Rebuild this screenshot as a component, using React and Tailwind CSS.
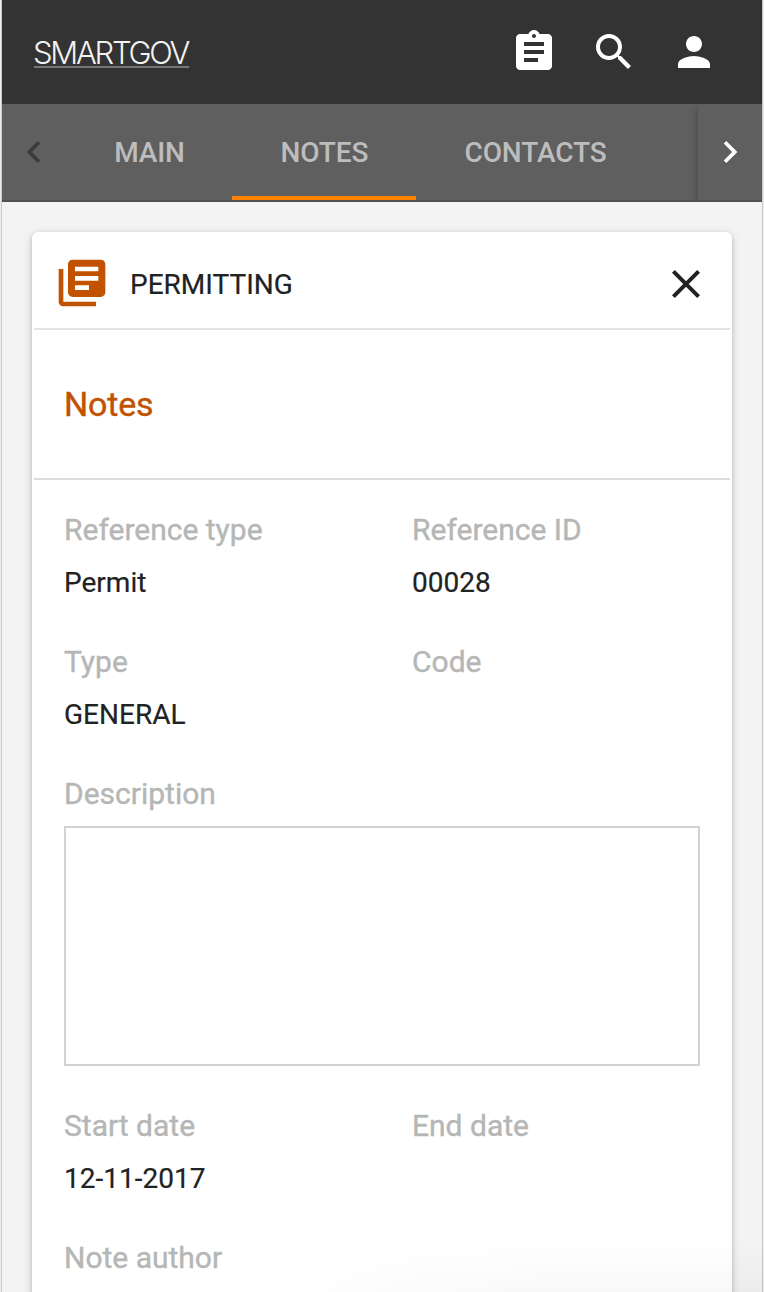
import {
  MdAssignment,
  MdChevronLeft,
  MdChevronRight,
  MdLibraryBooks,
  MdPerson,
  MdSearch,
} from "react-icons/md";

function Field({ label, value }) {
  return (
    <div className="h-[132px]">
      <div className="h-[53px] text-[30px] leading-[40px] text-[#b5b7b6] [-webkit-text-stroke:0.4px_#b5b7b6]">{label}</div>
      <div className="text-[28px] leading-[40px] [-webkit-text-stroke:0.2px_#212223]">{value}</div>
    </div>
  );
}

function Tab({ label, className, active }) {
  return (
    <button className={`flex h-[96px] items-center justify-center border-b-4 pt-1.5 pl-px text-[28px] font-medium tracking-[-0.1px] text-[#bdbdbd] ${active ? "border-[#ff8300]" : "border-transparent"} ${className}`}>
      {label}
    </button>
  );
}

export default function App() {
  return (
    <div className="relative h-[1292px] w-[764px] overflow-hidden bg-[#ececec] pr-px font-['Roboto',sans-serif] text-[#212223]">
      <div className="ml-px h-full border-r border-l border-[#cbcbcb] bg-[#f3f3f3]">
        <header className="flex h-[104px] items-center justify-between bg-[#333333] pr-[44px] pl-8 text-white">
          <a className="flex h-[32px] w-[155px] items-center border-b-2 border-[#777777] pt-[3px] font-['Inter',sans-serif] text-[31px] leading-[29px] font-light tracking-[-2.25px] whitespace-nowrap text-[#f2f2f2]"><span className="-ml-px">SMARTGOV</span></a>
          <nav className="flex gap-8">
            <MdAssignment size={48} />
            <MdSearch size={48} />
            <MdPerson size={48} />
          </nav>
        </header>

        <div className="flex h-[98px] border-b-2 border-[#515051] bg-[#5f5f5f]">
          <button className="flex w-16 items-center pl-[10px] text-[#3b3b3b]">
            <MdChevronLeft size={44} />
          </button>
          <div className="flex flex-1">
            <Tab label="MAIN" className="w-[166px]" />
            <Tab label="NOTES" className="w-[184px]" active />
            <Tab label="CONTACTS" className="w-[238px]" />
          </div>
          <button className="flex w-16 items-center bg-[#5f5f5f] pl-[10px] text-white shadow-[0_4px_8px_rgba(0,0,0,0.3)] [clip-path:inset(0_0_0_-12px)]">
            <MdChevronRight size={44} />
          </button>
        </div>

        <main className="px-[30px] pt-[30px]">
          <section className="h-[1080px] rounded-md bg-white px-0.5 shadow-[0_2px_10px_rgba(0,0,0,0.16),0_2px_4px_rgba(0,0,0,0.14)]">
            <div className="flex h-[98px] items-center border-b-2 border-[#e2e3e2] pr-7 pl-5">
              <MdLibraryBooks size={56} className="mt-[5px] text-[#c15300]" />
              <h1 className="mt-2.5 ml-5 flex-1 text-[28px] [-webkit-text-stroke:0.2px_#212223]">PERMITTING</h1>
              <svg width="32" height="32" viewBox="0 0 32 32" className="mt-2" fill="none" stroke="#212223" strokeWidth="4">
                <path d="M3.4 3.4 28.6 28.6M28.6 3.4 3.4 28.6" />
              </svg>
            </div>
            <div className="flex h-[150px] items-center border-b-2 border-[#dcdddc] pl-[30px]">
              <h2 className="text-[34px] tracking-[-0.2px] text-[#c15300] [-webkit-text-stroke:0.4px_#c15300]">Notes</h2>
            </div>
            <div className="px-[30px] pt-[30px]">
              <div className="grid grid-cols-[348px_1fr]">
                <Field label="Reference type" value="Permit" />
                <Field label="Reference ID" value="00028" />
                <Field label="Type" value="GENERAL" />
                <Field label="Code" />
              </div>
              <div className="h-[52px] text-[30px] leading-[40px] text-[#b5b7b6] [-webkit-text-stroke:0.4px_#b5b7b6]">Description</div>
              <textarea className="block h-[240px] w-[636px] resize-none border-2 border-[#d4d1d1] bg-white" aria-label="Description" />
              <div className="mt-10 grid grid-cols-[348px_1fr]">
                <Field label="Start date" value="12-11-2017" />
                <Field label="End date" />
                <Field label="Note author" />
              </div>
            </div>
          </section>
        </main>
      </div>
      <div className="pointer-events-none absolute right-0 bottom-0 h-[50px] w-[500px] bg-linear-to-t from-black/[0.028] to-transparent [mask-image:linear-gradient(to_right,transparent,black_60%)]" />
    </div>
  );
}
